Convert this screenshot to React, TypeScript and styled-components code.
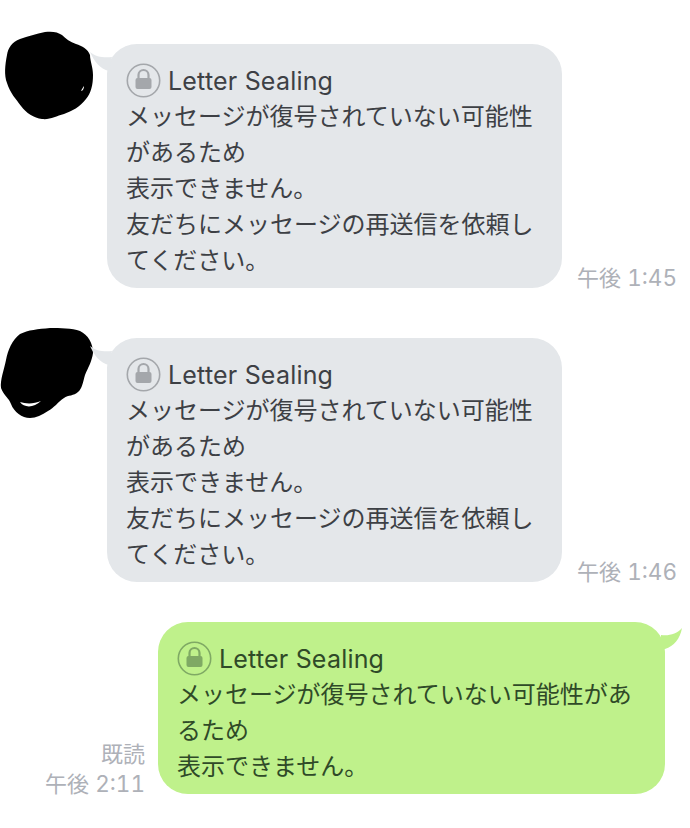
import React from "react";
import styled, { createGlobalStyle } from "styled-components";

const Global = createGlobalStyle`
  html, body { margin: 0; padding: 0; background: #fff; }
  body { font-family: Inter, "Noto Sans CJK JP", sans-serif; }
`;

const Page = styled.div`
  width: 690px;
  height: 828px;
  box-sizing: border-box;
  padding-top: 44px;
  display: flex;
  flex-direction: column;
  overflow: hidden;
`;

const Row = styled.div<{ $gap: number }>`
  display: flex;
  align-items: flex-end;
  margin-bottom: ${(p) => p.$gap}px;
`;

const AvatarSlot = styled.div<{ $lift: number }>`
  align-self: flex-start;
  width: 107px;
  height: 91px;
  margin-top: -${(p) => p.$lift}px;
  flex: none;
`;

const Bubble = styled.div<{ $mine?: boolean }>`
  position: relative;
  box-sizing: border-box;
  width: ${(p) => (p.$mine ? 507 : 455)}px;
  padding: 18px 19px 10px 20px;
  border-radius: 30px;
  background: ${(p) => (p.$mine ? "#bff18b" : "#e4e7ea")};
  color: ${(p) => (p.$mine ? "#2f4a28" : "#3d4045")};
  font-size: 24px;
  line-height: 36px;
`;

const Tail = styled.svg<{ $mine?: boolean }>`
  position: absolute;
  top: 0;
  ${(p) => (p.$mine ? "right: -20px;" : "left: -20px;")}
  overflow: visible;
`;

const Head = styled.div`
  display: flex;
  align-items: center;
  height: 36px;
  gap: 7px;
  margin-left: -1px;
`;

const HeadText = styled.span`
  position: relative;
  top: 1px;
  font-size: 25px;
  letter-spacing: 0.2px;
`;

const Line = styled.div`
  white-space: pre;
  margin-left: -1px;
  position: relative;
  top: 1px;
`;

const Meta = styled.div<{ $mine?: boolean }>`
  flex: none;
  font-size: 22px;
  line-height: 29px;
  color: #aeb1b8;
  text-align: right;
  ${(p) => (p.$mine ? "width: 145px; margin-right: 13px; margin-bottom: -5px;" : "margin-left: 15px; margin-bottom: -5px;")}
`;

const Clock = styled.span`
  font-size: 22.5px;
  font-variant-numeric: tabular-nums;
`;

const LockIcon = ({ mine }: { mine?: boolean }) => {
  const c = mine ? "#7fa964" : "#a4a7ab";
  return (
    <svg width="35" height="35" viewBox="0 0 35 35" fill="none" style={{ flex: "none" }}>
      <circle cx="17.5" cy="17.5" r="16.2" stroke={c} strokeWidth="1.6" />
      <path d="M12.5 15.5v-3.5a5 5 0 0 1 10 0v3.5" stroke={c} strokeWidth="2.2" />
      <rect x="9.5" y="15" width="16" height="11" rx="2" fill={c} />
    </svg>
  );
};

const Avatar1 = () => (
  <svg width="107" height="91" viewBox="0 0 107 91">
    <path
      d="M45 1C52 0 58 1 62 4C66 8 70 11 76 13C82 15 88 18 90 24C90 30 93 36 93 44C93 54 91 62 86 68C80 76 72 80 64 83C56 85 50 89 42 88C34 87 26 82 21 75C16 68 10 62 7 52C4 44 5 34 7 24C8 17 12 11 20 8C28 5 36 3 45 1Z"
      fill="#000"
    />
    <path d="M81 60C82 58 83 56 84 55C84 57 83 60 81 60Z" fill="#fff" />
  </svg>
);

const Avatar2 = () => (
  <svg width="107" height="91" viewBox="0 0 107 91">
    <path
      d="M50 0C60 0 72 0 80 3C88 7 93 15 93 25C92 33 88 40 85 47C83 54 82 61 78 64C74 68 68 67 64 70C58 74 54 80 48 83C42 87 36 90 30 90C22 90 14 84 11 76C9 70 4 68 1 60C0 52 4 42 6 32C8 22 12 12 20 6C28 2 38 1 50 0Z"
      fill="#000"
    />
    <path d="M20 74C26 76 34 76 41 73C34 80 24 80 20 74Z" fill="#fff" />
  </svg>
);

const Content = ({ lines, mine }: { lines: string[]; mine?: boolean }) => (
  <>
    <Tail $mine={mine} width="20" height="30" viewBox="0 0 20 30">
      {mine ? (
        <path d="M-4 13C4 14 12 12 17 6C15 17 9 24 0 27L-4 27Z" fill="#bff18b" />
      ) : (
        <path d="M3 8C9 13 17 14 25 13L22 27C13 25 7 17 3 8Z" fill="#e4e7ea" />
      )}
    </Tail>
    <Head>
      <LockIcon mine={mine} />
      <HeadText>Letter Sealing</HeadText>
    </Head>
    {lines.map((l) => (
      <Line key={l}>{l}</Line>
    ))}
  </>
);

const received = [
  "メッセージが復号されていない可能性",
  "があるため",
  "表示できません。",
  "友だちにメッセージの再送信を依頼し",
  "てください。",
];

export default function App() {
  return (
    <Page>
      <Global />
      <Row $gap={50}>
        <AvatarSlot $lift={13}>
          <Avatar1 />
        </AvatarSlot>
        <Bubble>
          <Content lines={received} />
        </Bubble>
        <Meta>
          午後 <Clock>1:45</Clock>
        </Meta>
      </Row>
      <Row $gap={40}>
        <AvatarSlot $lift={10}>
          <Avatar2 />
        </AvatarSlot>
        <Bubble>
          <Content lines={received} />
        </Bubble>
        <Meta>
          午後 <Clock>1:46</Clock>
        </Meta>
      </Row>
      <Row $gap={0}>
        <Meta $mine>
          既読
          <br />
          午後 <Clock>2:11</Clock>
        </Meta>
        <Bubble $mine>
          <Content
            mine
            lines={["メッセージが復号されていない可能性があ", "るため", "表示できません。"]}
          />
        </Bubble>
      </Row>
    </Page>
  );
}
